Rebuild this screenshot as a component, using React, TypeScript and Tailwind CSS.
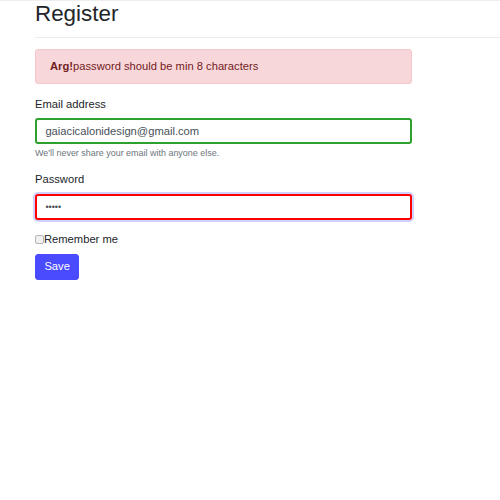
export default function App() {
  return (
    <div className="min-h-[500px] w-[500px] bg-white font-['Liberation_Sans',Arial,sans-serif] text-[11.2px] leading-[16.8px] text-[#212529] overflow-hidden">
      <div className="h-px w-full bg-[#eeeeee]" />
      <div className="pl-[35px]">
        <h1 className="text-[22.4px] leading-[26.88px] font-normal">Register</h1>
        <hr className="mt-[9px] border-0 border-t border-[#ebebeb]" />

        <form className="w-[377px] mt-[11px]" onSubmit={(e) => e.preventDefault()}>
          <div className="rounded-[3px] border border-[#f5c6cb] bg-[#f8d7da] px-[14px] py-[8.4px] text-[#721c24] mb-[11.2px]">
            <strong className="font-bold">Arg!</strong>password should be min 8 characters
          </div>

          <div className="mb-[11.2px]">
            <label className="block mb-[5.6px]">Email address</label>
            <input
              type="email"
              defaultValue="gaiacicalonidesign@gmail.com"
              className="block w-full h-[26px] rounded-[3px] border-2 border-[#2ea02e] px-[8.4px] text-[11.2px] text-[#495057] outline-none bg-white"
            />
            <small className="block mt-[2.8px] text-[8.96px] leading-[13.44px] text-[#6c757d]">
              We'll never share your email with anyone else.
            </small>
          </div>

          <div className="mb-[11.2px]">
            <label className="block mb-[5.6px]">Password</label>
            <input
              type="password"
              defaultValue="12345"
              className="block w-full h-[26px] rounded-[3px] border-2 border-[#ff0000] px-[8.4px] text-[9px] text-[#495057] outline-none bg-white shadow-[0_0_0_2px_rgba(70,70,255,0.25)]"
            />
          </div>

          <div className="mb-[6px] flex items-center">
            <input
              type="checkbox"
              className="appearance-none w-[9px] h-[9px] rounded-[2px] border border-[#b5b5b5] bg-[#f0f0f0] m-0"
            />
            <label>Remember me</label>
          </div>

          <button
            type="submit"
            className="rounded-[3px] bg-[#4a4aff] border border-[#4a4aff] px-[8.4px] h-[26px] text-white text-[11.2px]"
          >
            Save
          </button>
        </form>
      </div>
    </div>
  );
}
